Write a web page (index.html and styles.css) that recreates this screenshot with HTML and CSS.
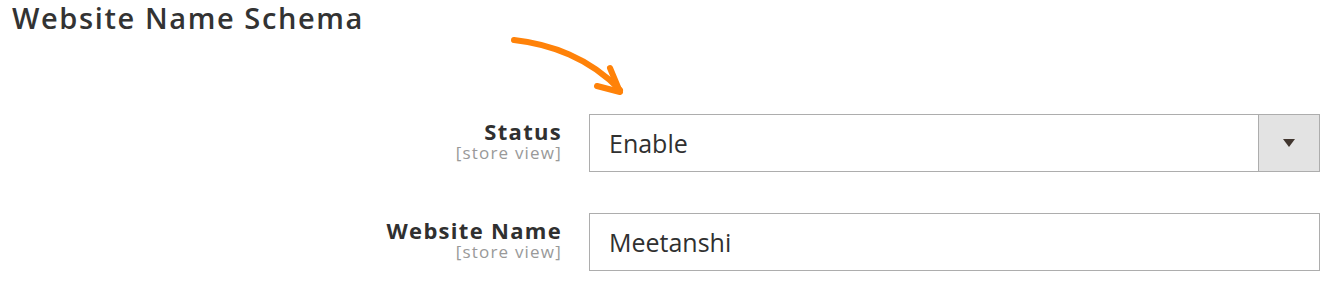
FILE: index.html
```html
<!DOCTYPE html>
<html>
<head>
<meta charset="utf-8">
<link rel="stylesheet" href="styles.css">
</head>
<body>
<div class="page">
  <h2 class="title">Website Name Schema</h2>
  <svg class="arrow" width="140" height="80" viewBox="0 0 140 80">
    <path d="M14 10 C 50 14, 90 28, 120 60" fill="none" stroke="#ff8209" stroke-width="6" stroke-linecap="round"/>
    <path d="M110 38 L 120 62 L 97 56" fill="none" stroke="#ff8209" stroke-width="6" stroke-linecap="round" stroke-linejoin="round"/>
  </svg>
  <div class="form">
    <div class="row">
      <div class="label">
        <span class="name">Status</span>
        <span class="scope">[store view]</span>
      </div>
      <div class="control select">
        <span class="value">Enable</span>
        <span class="btn"><span class="tri"></span></span>
      </div>
    </div>
    <div class="row">
      <div class="label">
        <span class="name">Website Name</span>
        <span class="scope">[store view]</span>
      </div>
      <div class="control">
        <span class="value">Meetanshi</span>
      </div>
    </div>
  </div>
</div>
</body>
</html>
```
FILE: styles.css
```css
html, body { margin: 0; padding: 0; background: #fff; }
body { font-family: "Open Sans", "Liberation Sans", sans-serif; color: #303030; }
.page { position: relative; width: 1334px; height: 282px; }
.title { margin: 0; padding: 1px 0 0 12px; font-size: 29px; font-weight: 600; line-height: 34px; letter-spacing: 1.6px; color: #333; }
.arrow { position: absolute; left: 500px; top: 30px; }
.form { display: flex; flex-direction: column; gap: 41px; padding-top: 79px; }
.row { display: flex; align-items: flex-start; }
.label { width: 561px; display: flex; flex-direction: column; align-items: flex-end; padding-top: 4px; }
.name { font-size: 22px; font-weight: 700; line-height: 26px; letter-spacing: 1.3px; margin-right: -1px; color: #303030; }
.scope { font-size: 17px; line-height: 18px; letter-spacing: 1.2px; margin-right: -1px; color: #999; }
.control { margin-left: 28px; width: 731px; height: 58px; box-sizing: border-box; border: 1px solid #adadad; display: flex; align-items: center; background: #fff; }
.value { flex: 1; padding-left: 19px; font-size: 25px; color: #303030; }
.btn { width: 61px; height: 100%; box-sizing: border-box; background: #e3e3e3; border-left: 1px solid #adadad; display: flex; align-items: center; justify-content: center; }
.tri { width: 0; height: 0; border-left: 6px solid transparent; border-right: 6px solid transparent; border-top: 8px solid #41362f; }
```
